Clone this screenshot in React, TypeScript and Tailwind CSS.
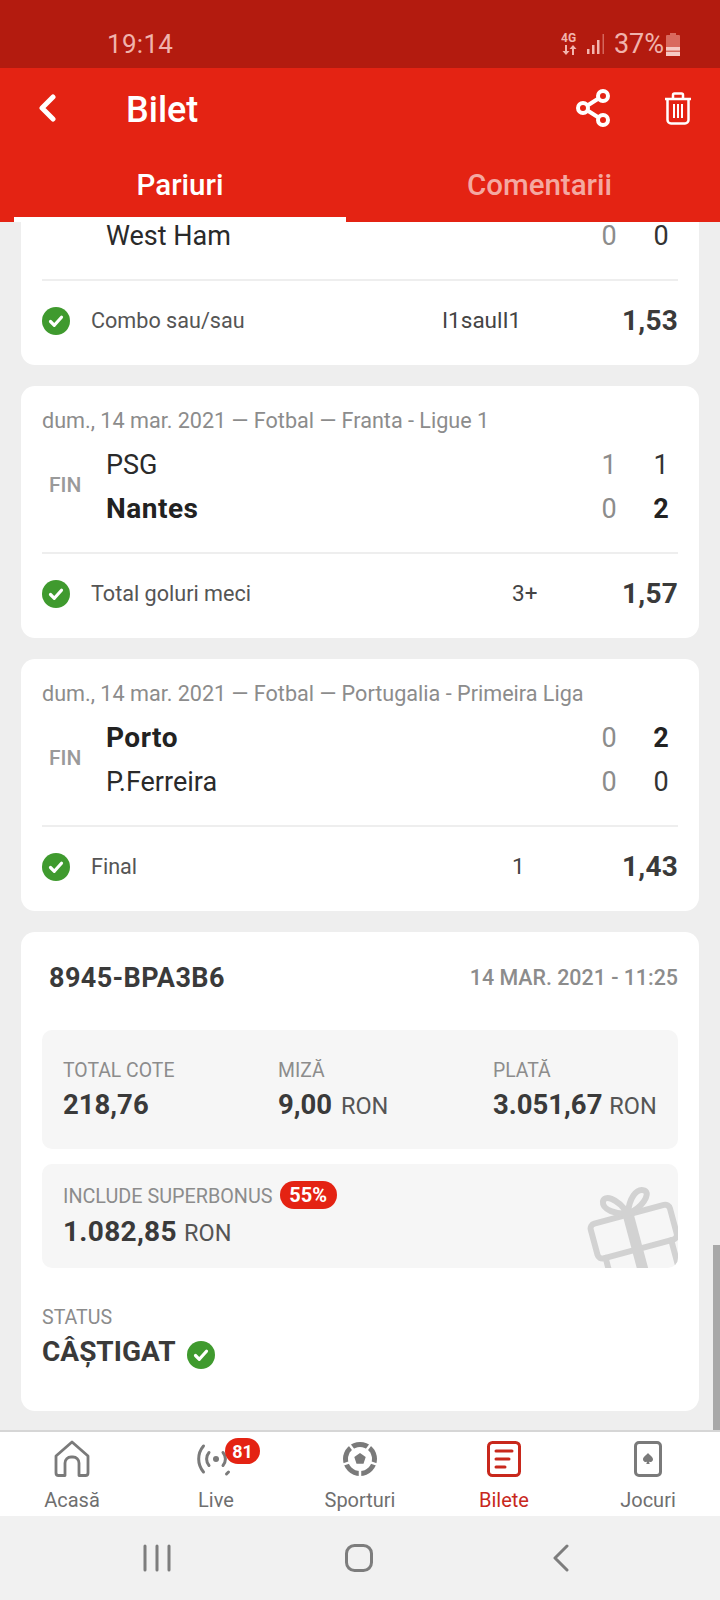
import React from 'react';

const CheckBadge = () => (
  <svg width="28" height="28" viewBox="0 0 28 28" className="shrink-0">
    <circle cx="14" cy="14" r="14" fill="#3f9a2e" />
    <path d="M8.5 14.5l3.8 3.8 7.2-8" fill="none" stroke="#fff" strokeWidth="3.2" strokeLinecap="round" strokeLinejoin="round" />
  </svg>
);

interface Team {
  name: string;
  first: string;
  second: string;
  bold?: boolean;
}

interface Bet {
  date?: string;
  teams: Team[];
  label: string;
  selection: string;
  selectionClass: string;
  odds: string;
}

const bets: Bet[] = [
  {
    teams: [{ name: 'West Ham', first: '0', second: '0' }],
    label: 'Combo sau/sau',
    selection: 'I1saulI1',
    selectionClass: 'w-[351px]',
    odds: '1,53',
  },
  {
    date: 'dum., 14 mar. 2021 — Fotbal — Franta - Ligue 1',
    teams: [
      { name: 'PSG', first: '1', second: '1' },
      { name: 'Nantes', first: '0', second: '2', bold: true },
    ],
    label: 'Total goluri meci',
    selection: '3+',
    selectionClass: 'w-[421px]',
    odds: '1,57',
  },
  {
    date: 'dum., 14 mar. 2021 — Fotbal — Portugalia - Primeira Liga',
    teams: [
      { name: 'Porto', first: '0', second: '2', bold: true },
      { name: 'P.Ferreira', first: '0', second: '0' },
    ],
    label: 'Final',
    selection: '1',
    selectionClass: 'w-[421px]',
    odds: '1,43',
  },
];

const BetCard = ({ bet }: { bet: Bet }) => (
  <div className={`bg-white rounded-[14px] px-[21px] pb-[30px] ${bet.date ? 'pt-[23px]' : 'pt-[16px]'}`}>
    {bet.date && <div className="h-[24px] leading-[24px] text-[21.6px] text-[#8c8c8c] whitespace-nowrap">{bet.date}</div>}
    <div className={`flex items-center ${bet.date ? 'mt-[10px]' : ''}`}>
      <div className="w-[64px] pl-[7px] pb-[2px] text-[21px] font-medium text-[#9a9a9a]">{bet.date ? 'FIN' : ''}</div>
      <div className="flex-1">
        {bet.teams.map(team => (
          <div key={team.name} className="flex items-center h-[44px]">
            <div className={`flex-1 ${team.bold ? 'text-[28px] tracking-[0.5px] font-bold text-[#222222]' : 'text-[27px] text-[#2a2a2a]'}`}>{team.name}</div>
            <div className="w-[34px] text-center text-[27px] text-[#8c8c8c]">{team.first}</div>
            <div className={`w-[34px] ml-[18px] text-center text-[27px] ${team.bold ? 'font-bold text-[#222222]' : 'text-[#333333]'}`}>{team.second}</div>
          </div>
        ))}
      </div>
    </div>
    <div className="mt-[21px] h-[2px] bg-[#eeeeee]" />
    <div className="mt-[26px] flex items-center h-[28px]">
      <CheckBadge />
      <div className={`ml-[21px] text-[21.6px] text-[#555555] ${bet.selectionClass}`}>{bet.label}</div>
      <div className="text-[22.5px] text-[#444444]">{bet.selection}</div>
      <div className="ml-auto text-[28px] font-bold tracking-[0.2px] text-[#3a3a3a]">{bet.odds}</div>
    </div>
  </div>
);

const navItems = [
  {
    label: 'Acasă',
    icon: (
      <svg width="40" height="40" viewBox="0 0 40 40" fill="none" stroke="#7a7a7a" strokeWidth="2.8" strokeLinejoin="round">
        <path d="M4 17L20 3l16 14v17a2.5 2.5 0 0 1-2.5 2.5H27V24a6 6 0 0 0-6-6h-2a6 6 0 0 0-6 6v12.5H6.500A2.500 2.500 0 0 1 4 34z" />
      </svg>
    ),
  },
  {
    label: 'Live',
    icon: (
      <svg width="40" height="40" viewBox="0 0 40 40" fill="none" stroke="#7a7a7a" strokeWidth="3" strokeLinecap="round">
        <circle cx="20" cy="20" r="3" fill="#7a7a7a" stroke="none" />
        <path d="M13 13.500a10 10 0 0 0 0 13M27 13.500a10 10 0 0 1 0 13M7.500 7a20 20 0 0 0 0 26M32.500 33l-2 2" />
      </svg>
    ),
  },
  {
    label: 'Sporturi',
    icon: (
      <svg width="40" height="40" viewBox="0 0 40 40">
        <circle cx="20" cy="20" r="17" fill="#7a7a7a" />
        <circle cx="20" cy="20" r="12" fill="#fff" />
        <path d="M20 14l5.700 4.100-2.200 6.700h-7l-2.200-6.700z" fill="#7a7a7a" />
        <path d="M26.500 11.100L30.600 5.400M13.500 11.100L9.400 5.400M30.500 23.400l6.600 2.200M9.500 23.400l-6.600 2.200M20 31v7" stroke="#fff" strokeWidth="2.5" fill="none" />
      </svg>
    ),
  },
  {
    label: 'Bilete',
    active: true,
    icon: (
      <svg width="40" height="40" viewBox="0 0 40 40" fill="none" stroke="#c8281c" strokeWidth="3">
        <rect x="4.500" y="3.500" width="31" height="33" rx="4" />
        <path d="M12 12h16M12 20h13M12 28h9" strokeLinecap="round" />
      </svg>
    ),
  },
  {
    label: 'Jocuri',
    icon: (
      <svg width="40" height="40" viewBox="0 0 40 40" fill="none">
        <rect x="7.500" y="3.500" width="25" height="33" rx="3.500" stroke="#7a7a7a" strokeWidth="3" />
        <path d="M20 14c2.200 2.600 5 4 5 6.500a2.500 2.500 0 0 1-4.100 1.900l.8 2.600h-3.400l.8-2.600a2.500 2.500 0 0 1-4.100-1.900c0-2.500 2.800-3.900 5-6.500z" fill="#7a7a7a" />
      </svg>
    ),
  },
];

export default function App() {
  return (
    <div className="flex flex-col h-[1600px] w-[720px] overflow-hidden bg-[#eeeeee] font-['Roboto',sans-serif]">
      {/* Status bar */}
      <div className="h-[68px] shrink-0 bg-[#b31b0f] flex items-center pt-[20px] pl-[107px] pr-[40px] text-[#f0b3ac]">
        <span className="text-[26px] tracking-[0.3px]">19:14</span>
        <div className="ml-auto flex items-center">
          <svg width="18" height="24" viewBox="0 0 18 24" fill="#f2b5ae">
            <text x="0" y="10" fontSize="12" fontWeight="700" fontFamily="Roboto, sans-serif">4G</text>
            <path d="M4 13v6H1.500l3.500 4 3.500-4H6v-6zM13 23v-6h2.500L12 13l-3.500 4H11v6z" />
          </svg>
          <svg width="18" height="24" viewBox="0 0 18 24" fill="#f2b5ae" className="ml-[8px]">
            <rect x="0" y="17" width="2.500" height="5" />
            <rect x="5" y="13" width="2.500" height="9" />
            <rect x="10" y="8" width="2.500" height="14" />
            <rect x="15.500" y="2" width="1.500" height="20" fill="#d4665c" />
          </svg>
          <span className="ml-[9px] text-[27px]">37%</span>
          <svg width="14" height="24" viewBox="0 0 14 24" className="ml-[2px]">
            <path d="M4 1h6v2h3a1 1 0 0 1 1 1v19a1 1 0 0 1-1 1H1a1 1 0 0 1-1-1V4a1 1 0 0 1 1-1h3z" fill="#d9695e" />
            <rect x="0" y="15" width="14" height="3.500" fill="#f6c9c4" />
            <rect x="0" y="20" width="14" height="4" fill="#f6c9c4" />
          </svg>
        </div>
      </div>

      {/* Header */}
      <div className="h-[154px] shrink-0 bg-[#e42313] flex flex-col">
        <div className="flex items-center h-[80px] pl-[37px] pr-[28px]">
          <svg width="20" height="28" viewBox="0 0 20 28" fill="none" stroke="#fff" strokeWidth="5" strokeLinecap="round" strokeLinejoin="round">
            <path d="M16 3L5 14l11 11" />
          </svg>
          <span className="ml-[69px] pt-[3px] text-[36px] font-medium text-white">Bilet</span>
          <svg width="34" height="38" viewBox="0 0 34 38" fill="none" stroke="#fff" strokeWidth="4" className="ml-auto">
            <circle cx="27" cy="7" r="5" />
            <circle cx="7" cy="19" r="5" />
            <circle cx="27" cy="31" r="5" />
            <path d="M11.500 16.500l11-7M11.500 21.500l11 7" />
          </svg>
          <svg width="28" height="33" viewBox="0 0 28 33" fill="none" stroke="#fff" strokeWidth="2.500" className="ml-[54px]">
            <path d="M1 7h26M9 7V3a1.500 1.500 0 0 1 1.500-1.500h7A1.500 1.500 0 0 1 19 3v4" />
            <path d="M3.500 7v21a3.500 3.500 0 0 0 3.500 3.500h14a3.500 3.500 0 0 0 3.500-3.500V7" />
            <path d="M10 12v14M14 12v14M18 12v14" strokeWidth="2" />
          </svg>
        </div>
        <div className="flex flex-1 px-[14px]">
          <div className="w-[332px] flex items-center justify-center border-b-[5px] border-white pt-[5px] text-[29.5px] font-medium text-white">
            Pariuri
          </div>
          <div className="flex-1 flex items-center justify-center pl-[27px] text-[29.5px] font-medium text-[#f4a8a1]">
            Comentarii
          </div>
        </div>
      </div>

      {/* Scrolled content */}
      <div className="relative flex-1 min-h-0 overflow-hidden flex flex-col justify-end gap-[21px] px-[21px] pb-[19px]">
        {bets.map(bet => (
          <BetCard key={bet.label} bet={bet} />
        ))}

        <div className="bg-white rounded-[14px] px-[21px] pt-[29px] pb-[42px] text-[#3a3a3a]">
          <div className="flex items-center justify-between h-[34px]">
            <span className="pl-[7px] text-[27px] font-bold tracking-[0.4px]">8945-BPA3B6</span>
            <span className="text-[21.400px] font-medium text-[#8c8c8c]">14 MAR. 2021 - 11:25</span>
          </div>

          <div className="mt-[35px] h-[119px] bg-[#f6f6f6] rounded-[10px] flex pt-[28px] pl-[21px]">
            <div className="w-[215px]">
              <div className="text-[19.400px] leading-[26px] text-[#8c8c8c]">TOTAL COTE</div>
              <div className="mt-[4px] text-[27.500px] leading-[34px] font-bold">218,76</div>
            </div>
            <div className="w-[215px]">
              <div className="text-[19.400px] leading-[26px] text-[#8c8c8c]">MIZĂ</div>
              <div className="mt-[4px] text-[27.500px] leading-[34px] font-bold">
                9,00 <span className="ml-[2px] text-[23.500px] font-normal text-[#555555]">RON</span>
              </div>
            </div>
            <div>
              <div className="text-[19.400px] leading-[26px] text-[#8c8c8c]">PLATĂ</div>
              <div className="mt-[4px] text-[27.500px] leading-[34px] font-bold">
                3.051,67 <span className="text-[23.500px] font-normal text-[#555555]">RON</span>
              </div>
            </div>
          </div>

          <div className="relative mt-[15px] h-[104px] bg-[#f6f6f6] rounded-[10px] overflow-hidden pt-[18px] pl-[21px]">
            <div className="flex items-center h-[30px]">
              <span className="text-[19.800px] text-[#8c8c8c]">INCLUDE SUPERBONUS</span>
              <span className="ml-[7px] -mt-[4px] h-[28px] w-[57px] rounded-[14px] bg-[#e42313] flex items-center justify-center text-[20px] font-bold text-white">55%</span>
            </div>
            <div className="mt-[3px] text-[28px] tracking-[0.3px] leading-[34px] font-bold">
              1.082,85 <span className="text-[23.500px] tracking-normal font-normal text-[#555555]">RON</span>
            </div>
            <svg width="94" height="90" viewBox="0 0 94 90" fill="none" stroke="#d2d2d2" strokeWidth="6" strokeLinejoin="round" strokeLinecap="round" className="absolute right-[-1px] top-[20px]">
              <g transform="rotate(-15 47 45)">
                <rect x="7" y="30" width="82" height="36" rx="5" />
                <path d="M14 66v30h68V66" />
                <path d="M47 30V96" strokeWidth="11" strokeLinecap="butt" />
                <path d="M47 29C36 27 23 19 26 11c3-6 14-1 21 18zM47 29c5-14 15-23 22-18 6 5-8 17-22 18z" strokeWidth="6" />
              </g>
            </svg>
          </div>

          <div className="mt-[37px] text-[19.600px] leading-[26px] text-[#8c8c8c]">STATUS</div>
          <div className="mt-[4px] flex items-center h-[34px]">
            <span className="text-[28px] font-bold">CÂȘTIGAT</span>
            <span className="ml-[12px] mt-[5px] flex"><CheckBadge /></span>
          </div>
        </div>

        <div className="absolute right-0 bottom-0 w-[7px] h-[185px] bg-[#a8a8a8]" />
      </div>

      {/* Bottom nav */}
      <div className="h-[86px] shrink-0 bg-white border-t-[2px] border-[#d6d6d6] grid grid-cols-5">
        {navItems.map(item => (
          <div key={item.label} className="relative flex flex-col items-center pt-[7px]">
            {item.icon}
            {item.label === 'Live' && (
              <span className="absolute left-[81px] top-[6px] h-[26px] w-[35px] rounded-[13px] bg-[#e42313] flex items-center justify-center text-[18px] font-bold text-white">
                81
              </span>
            )}
            <span className={`mt-[9px] text-[20px] leading-[24px] ${item.active ? 'text-[#c8281c]' : 'text-[#6f6f6f]'}`}>
              {item.label}
            </span>
          </div>
        ))}
      </div>

      {/* Android nav */}
      <div className="h-[84px] shrink-0 bg-[#f1f1f1] grid grid-cols-3 items-center pl-[56px] pr-[58px]">
        <svg width="28" height="28" viewBox="0 0 28 28" fill="none" stroke="#7d7d7d" strokeWidth="3" strokeLinecap="round" className="justify-self-center">
          <path d="M2 2v24M14 2v24M26 2v24" />
        </svg>
        <svg width="28" height="28" viewBox="0 0 28 28" fill="none" stroke="#7d7d7d" strokeWidth="3" className="justify-self-center">
          <rect x="1.500" y="1.500" width="25" height="25" rx="8" />
        </svg>
        <svg width="18" height="28" viewBox="0 0 18 28" fill="none" stroke="#7d7d7d" strokeWidth="3" strokeLinecap="round" strokeLinejoin="round" className="justify-self-center">
          <path d="M15 2L3 14l12 12" />
        </svg>
      </div>
    </div>
  );
}
